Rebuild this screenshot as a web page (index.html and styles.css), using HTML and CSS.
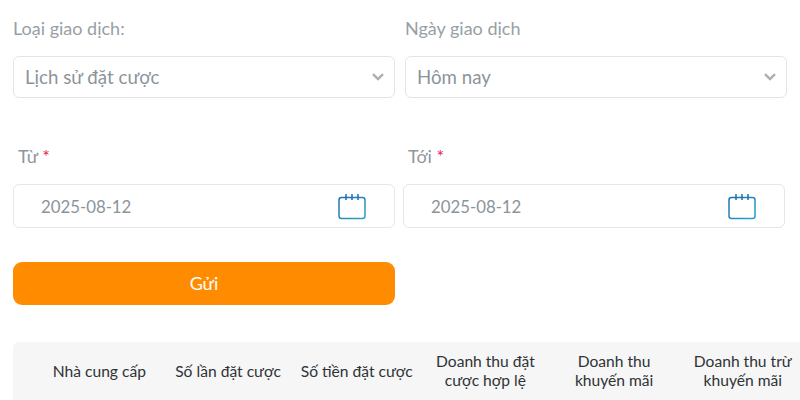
FILE: index.html
```html
<!DOCTYPE html>
<html lang="vi">
<head>
    <meta charset="UTF-8">
    <title>Lịch sử giao dịch</title>
    <link rel="stylesheet" href="styles.css">
</head>
<body>
    <form class="filter-form">
        <div class="row row-select">
            <div class="field">
                <label>Loại giao dịch:</label>
                <div class="select-box">
                    <span>Lịch sử đặt cược</span>
                    <svg class="chevron" width="12" height="8" viewBox="0 0 12 8"><path d="M1 1.200 6 6l5-4.800" fill="none" stroke="#a8aeb3" stroke-width="2.400"/></svg>
                </div>
            </div>
            <div class="field">
                <label>Ngày giao dịch</label>
                <div class="select-box">
                    <span>Hôm nay</span>
                    <svg class="chevron" width="12" height="8" viewBox="0 0 12 8"><path d="M1 1.200 6 6l5-4.800" fill="none" stroke="#a8aeb3" stroke-width="2.400"/></svg>
                </div>
            </div>
        </div>

        <div class="row row-date">
            <div class="field">
                <label class="date-label">Từ <em>*</em></label>
                <div class="date-box">
                    <span>2025-08-12</span>
                    <svg class="calendar" width="28" height="26" viewBox="0 0 28 26"><defs><linearGradient id="cal1" x1="0" y1="0" x2="1" y2="1"><stop offset="0" stop-color="#1f6fb0"/><stop offset="1" stop-color="#2ba3c9"/></linearGradient></defs><g fill="none" stroke="url(#cal1)" stroke-width="1.500"><rect x="1" y="3.500" width="26" height="21" rx="2.500"/><path d="M1 8.500h26"/></g><path d="M8 0v6M14 0v6M20 0v6" stroke="#1f6fb0" stroke-width="1.500"/></svg>
                </div>
            </div>
            <div class="field">
                <label class="date-label">Tới <em>*</em></label>
                <div class="date-box">
                    <span>2025-08-12</span>
                    <svg class="calendar" width="28" height="26" viewBox="0 0 28 26"><defs><linearGradient id="cal2" x1="0" y1="0" x2="1" y2="1"><stop offset="0" stop-color="#1f6fb0"/><stop offset="1" stop-color="#2ba3c9"/></linearGradient></defs><g fill="none" stroke="url(#cal2)" stroke-width="1.500"><rect x="1" y="3.500" width="26" height="21" rx="2.500"/><path d="M1 8.500h26"/></g><path d="M8 0v6M14 0v6M20 0v6" stroke="#1f6fb0" stroke-width="1.500"/></svg>
                </div>
            </div>
        </div>

        <button type="button" class="submit-btn">Gửi</button>
    </form>

    <div class="table-head">
        <div>Nhà cung cấp</div>
        <div>Số lần đặt cược</div>
        <div>Số tiền đặt cược</div>
        <div>Doanh thu đặt<br>cược hợp lệ</div>
        <div>Doanh thu<br>khuyến mãi</div>
        <div>Doanh thu trừ<br>khuyến mãi</div>
    </div>
</body>
</html>
```

FILE: styles.css
```css
* {
    box-sizing: border-box;
}

html, body {
    height: 400px;
    overflow: hidden;
}

body {
    margin: 0;
    padding: 18px 0 0 13px;
    background-color: #fff;
    font-family: "Lato", "Noto Sans", sans-serif;
    color: #8b949b;
}

.row {
    display: flex;
}

.field {
    display: flex;
    flex-direction: column;
    width: 382px;
}

label {
    display: block;
    height: 22px;
    font-size: 18px;
    line-height: 22px;
    color: #97a0a6;
}

.row-select {
    gap: 10px;
}

.row-select label {
    margin-bottom: 16px;
    line-height: 21px;
}

.row-date {
    gap: 8px;
    margin-top: 47px;
}

.date-label {
    padding-left: 5px;
    margin-bottom: 17px;
    color: #8f979c;
}

.date-label em {
    font-style: normal;
    color: #e8214f;
}

.select-box {
    display: flex;
    align-items: center;
    justify-content: space-between;
    height: 42px;
    padding: 0 10px 0 11px;
    border: 1px solid #e1e5e8;
    border-radius: 6px;
    font-size: 18.700px;
}

.date-box {
    display: flex;
    align-items: center;
    justify-content: space-between;
    height: 44px;
    padding: 0 28px 0 27px;
    border: 1px solid #e4e6e8;
    border-radius: 6px;
    font-size: 16.800px;
}

.calendar {
    margin-top: 1px;
}

.submit-btn {
    display: block;
    width: 382px;
    height: 43px;
    margin-top: 34px;
    padding-bottom: 3px;
    border: none;
    border-radius: 9px;
    background-color: #ff8c00;
    color: #fff;
    font-family: inherit;
    font-size: 18px;
}

.table-head {
    display: grid;
    grid-template-columns: repeat(6, 128.700px);
    align-items: center;
    width: 787px;
    height: 58px;
    margin-top: 37px;
    padding-left: 22px;
    border-radius: 6px 0 0 0;
    background-color: #f6f6f6;
    color: #2f3336;
    font-size: 15.600px;
    line-height: 19px;
    text-align: center;
    white-space: nowrap;
}
```
